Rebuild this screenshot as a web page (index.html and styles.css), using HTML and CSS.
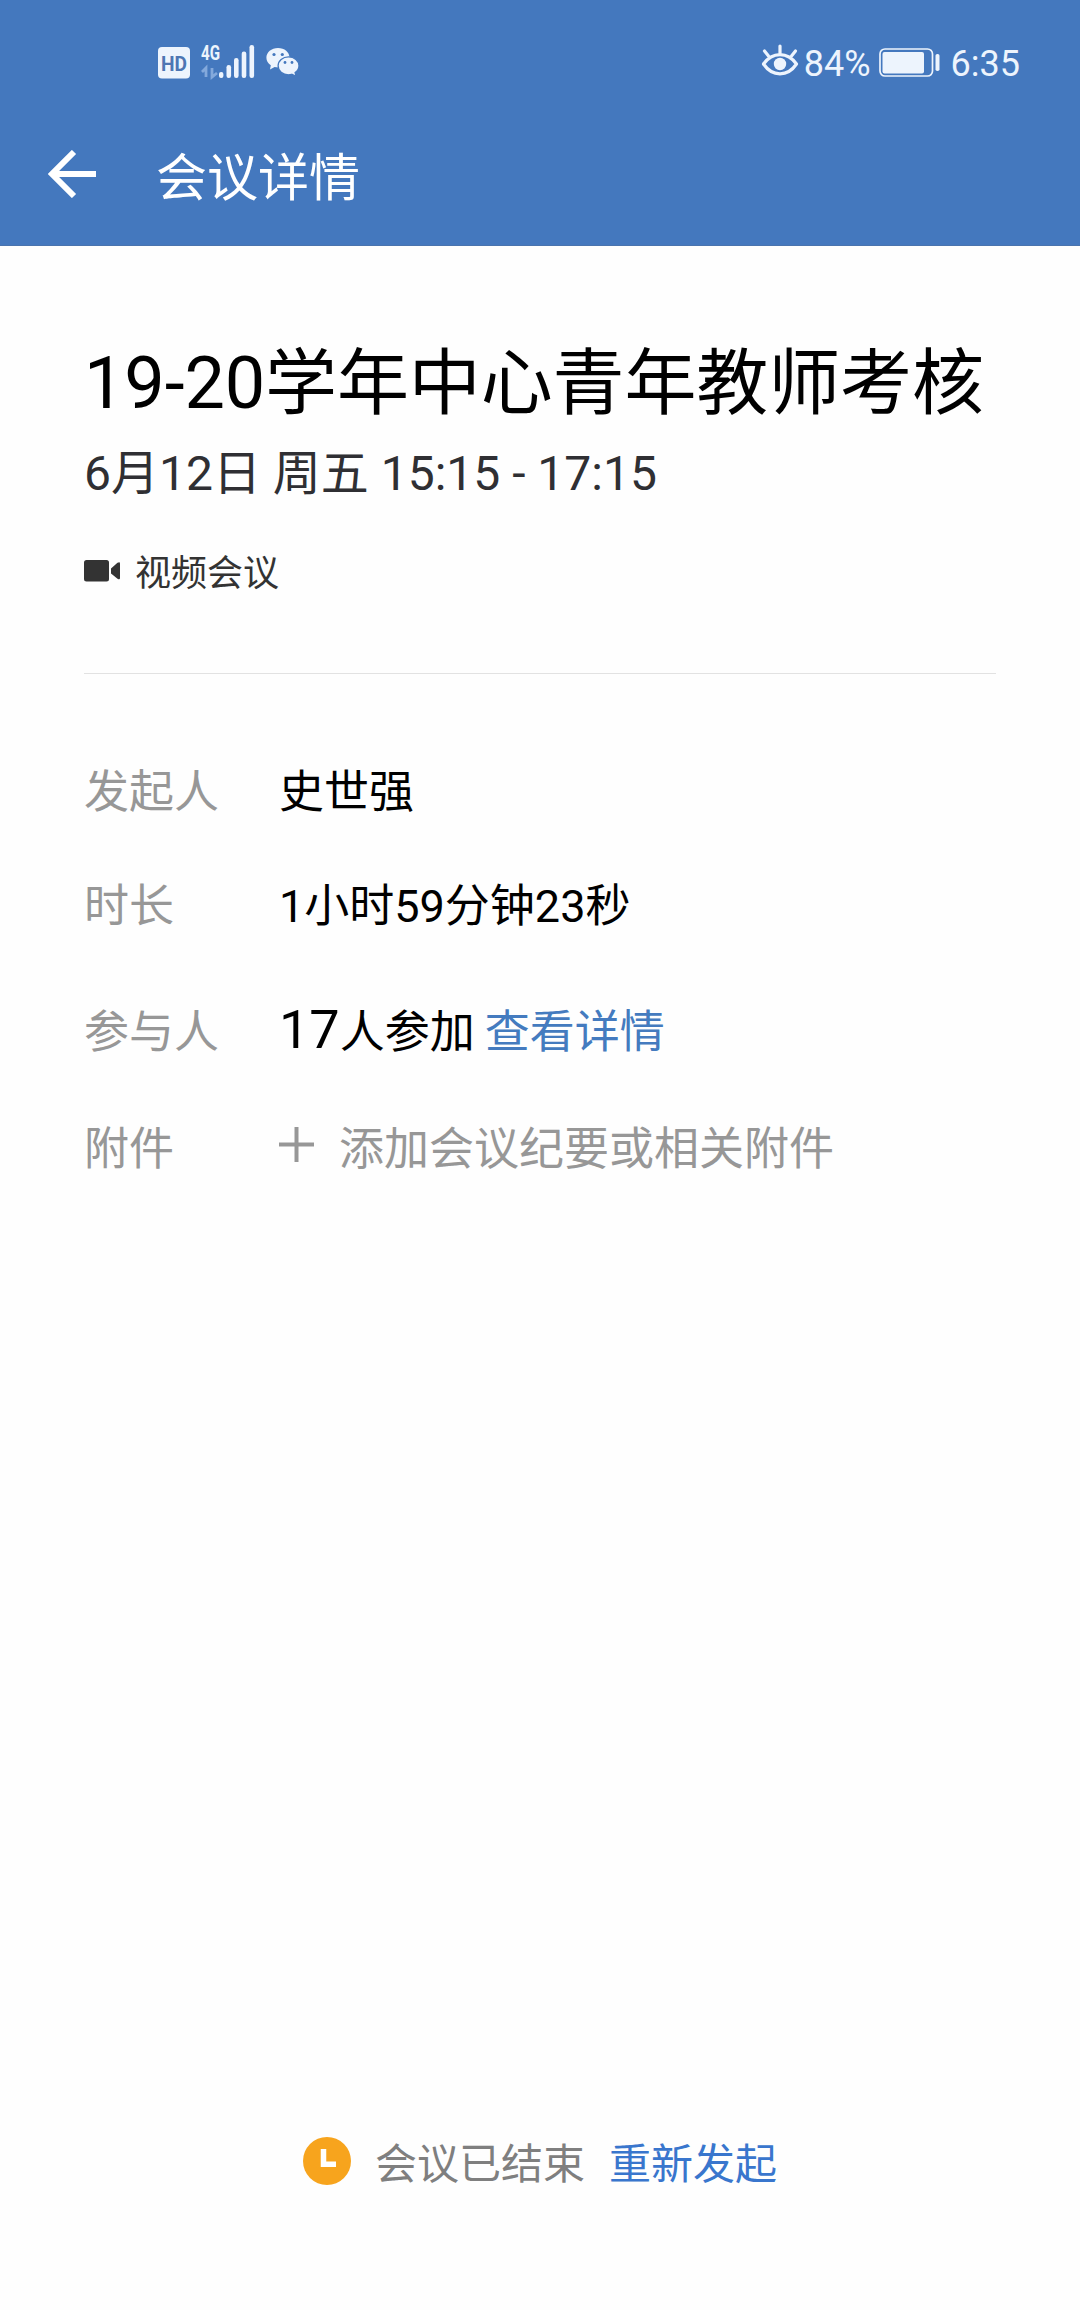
FILE: index.html
```html
<!DOCTYPE html>
<html lang="zh-CN">
<head>
<meta charset="utf-8">
<title>会议详情</title>
<link rel="stylesheet" href="styles.css">
</head>
<body>
<div class="screen">
  <header class="header">
    <div class="status">
      <div class="status-left">
        <svg class="hd" width="34" height="34" viewBox="0 0 34 34">
          <rect x="1" y="1" width="32" height="31.5" rx="4" fill="#edf4fd"/>
          <text x="17" y="24.500" class="hd-text" textLength="26" lengthAdjust="spacingAndGlyphs">HD</text>
        </svg>
        <svg class="signal" width="56" height="44" viewBox="0 -6 56 44">
          <text x="1" y="17" class="net-text" textLength="19" lengthAdjust="spacingAndGlyphs">4G</text>
          <path d="M2 29l4-4v9M12 25v9l5-4" fill="none" stroke="#83a9dc" stroke-width="2.800"/>
          <g fill="#edf4fd">
            <rect x="19" y="29" width="4.4" height="6" rx="2"/>
            <rect x="26.5" y="22" width="4.6" height="13" rx="2.2"/>
            <rect x="34" y="15" width="4.6" height="20" rx="2.2"/>
            <rect x="41.7" y="8.500" width="4.6" height="26.500" rx="2.2"/>
            <rect x="49.500" y="2" width="4.6" height="33" rx="2.2"/>
          </g>
        </svg>
        <svg class="wechat" width="34" height="30" viewBox="0 0 34 30">
          <path d="M12 1C5.400 1 .4 5.300.4 10.700c0 3.200 1.700 5.800 4.400 7.600L4 22.500l4.600-2.400c1.200.3 2.300.4 3.600.4 6.400 0 11.300-4.300 11.300-9.800S18.500 1 12 1z" fill="#edf4fd"/>
          <path d="M22.500 9.800c-5.800 0-10.400 4-10.400 9s4.600 9 10.400 9c1.200 0 2.200-.2 3.300-.5l4.200 2-.9-3.700c2.400-1.700 3.900-4 3.900-6.800 0-5-4.700-9-10.500-9z" fill="#edf4fd" stroke="#4478be" stroke-width="1.300"/>
          <g fill="#4478be"><circle cx="8" cy="7.500" r="1.600"/><circle cx="16.300" cy="7.500" r="1.600"/><circle cx="19" cy="15.500" r="1.400"/><circle cx="26" cy="15.500" r="1.400"/></g>
        </svg>
      </div>
      <div class="status-right">
        <svg class="eye" width="38" height="34" viewBox="0 0 38 34">
          <g fill="none" stroke="#edf4fd" stroke-width="3.200" stroke-linecap="round">
            <path d="M2.500 20C7 13.700 12.500 10.600 19 10.600S31 13.700 35.500 20C31 26.600 25.500 29.800 19 29.800S7 26.600 2.500 20z" stroke-linejoin="round"/>
            <path d="M19 9V2M7.500 12L3.500 7M30.500 12l4-5"/>
          </g>
          <circle cx="19" cy="20" r="6.200" fill="#edf4fd"/>
        </svg>
        <span class="percent">84%</span>
        <svg class="battery" width="62" height="30" viewBox="0 0 62 30">
          <rect x="1" y="1" width="52.500" height="27" rx="5" fill="none" stroke="#edf4fd" stroke-width="1.700"/>
          <rect x="3.500" y="4" width="41.500" height="21.500" rx="2" fill="#edf4fd"/>
          <rect x="56.500" y="6" width="4" height="17" rx="1.800" fill="#edf4fd"/>
        </svg>
        <span class="clock">6:35</span>
      </div>
    </div>
    <nav class="navbar">
      <svg class="back" width="48" height="48" viewBox="0 0 48 48">
        <path d="M48 24H5M26 2L4 24l22 22" fill="none" stroke="#fff" stroke-width="6"/>
      </svg>
      <span class="nav-title">会议详情</span>
    </nav>
  </header>

  <main class="content">
    <h1 class="title">19-20学年中心青年教师考核</h1>
    <div class="date">6月12日 周五 15:15 - 17:15</div>
    <div class="kind">
      <svg class="camera" width="37" height="22" viewBox="0 0 37 22">
        <rect x="0" y="0" width="25" height="21.500" rx="2.500" fill="#333"/>
        <path d="M27 8.500l6.500-5.700Q36 1.200 36 3.500V18q0 2.300-2.500.7L27 13.500z" fill="#333"/>
      </svg>
      <span>视频会议</span>
    </div>
    <dl class="details">
      <div class="row"><dt>发起人</dt><dd>史世强</dd></div>
      <div class="row duration"><dt>时长</dt><dd>1小时59分钟23秒</dd></div>
      <div class="row people"><dt>参与人</dt><dd><span class="count">17</span>人参加<a class="link">查看详情</a></dd></div>
      <div class="row files"><dt>附件</dt><dd class="add">
        <svg class="plus" width="36" height="36" viewBox="0 0 36 36"><path d="M0 17.500h35M17.500 0v35" stroke="#979797" stroke-width="4"/></svg>
        <span>添加会议纪要或相关附件</span></dd></div>
    </dl>
  </main>

  <footer class="footer">
    <svg class="ended" width="48" height="48" viewBox="0 0 48 48">
      <circle cx="24" cy="24" r="24" fill="#f7a41d"/>
      <path d="M20.500 12v15.300H33" fill="none" stroke="#fff" stroke-width="5.500"/>
    </svg>
    <span class="ended-text">会议已结束</span>
    <a class="restart">重新发起</a>
  </footer>
</div>
</body>
</html>
```
FILE: styles.css
```css
* { box-sizing: border-box; }

body {
  margin: 0;
  background: #fefefe;
  font-family: Roboto, "Noto Sans CJK SC", sans-serif;
  color: #000;
}

.screen {
  width: 1080px;
  height: 2310px;
  display: flex;
  flex-direction: column;
}

svg { display: block; flex: none; }

.header {
  height: 246px;
  flex: none;
  background: #4478be;
  border-bottom: 1px solid #4a74ae;
  color: #fff;
}

.status {
  height: 104px;
  padding: 0 60px 0 157px;
  display: flex;
  justify-content: space-between;
  color: #edf4fd;
  font-size: 36px;
  line-height: 40px;
}

.status-left,
.status-right { display: flex; align-items: flex-start; }

.hd { margin-top: 46px; }
.hd-text {
  font: 700 21px Roboto, sans-serif;
  text-anchor: middle;
  fill: #4d76b3;
}
.signal { margin: 37px 0 0 9px; }
.net-text { font: 700 20px Roboto, sans-serif; fill: #edf4fd; }
.wechat { margin: 47px 0 0 10px; }

.eye { margin-top: 44px; }
.percent { margin: 44px 0 0 5px; }
.battery { margin: 48px 0 0 8px; }
.clock { margin: 44px 0 0 10px; }

.navbar {
  height: 141px;
  padding: 0 48px;
  display: flex;
  align-items: flex-start;
}
.back { margin-top: 46px; }
.nav-title {
  margin: 45px 0 0 60px;
  font-size: 51px;
  line-height: 60px;
}

.content {
  flex: 1;
  padding: 96px 84px 0;
}

.title {
  margin: 0;
  font-size: 72px;
  font-weight: 400;
  line-height: 84px;
  letter-spacing: -0.13px;
  white-space: nowrap;
}

.date {
  margin-top: 18px;
  font-size: 48px;
  line-height: 60px;
  color: #2f2f33;
}

.kind {
  height: 170px;
  padding-top: 47px;
  border-bottom: 1px solid #e2e2e2;
  display: flex;
  align-items: flex-start;
  font-size: 36px;
  line-height: 46px;
  color: #333;
}
.camera { margin: 9px 14px 0 0; }

.details { margin: 89px 0 0; }

.row {
  display: grid;
  grid-template-columns: 195px 1fr;
  height: 60px;
  font-size: 45px;
  line-height: 60px;
}
.row dt { color: #979797; }
.row dd { margin: 0; white-space: nowrap; }
.duration { margin-top: 54px; }
.people { margin-top: 66px; }
.files { margin-top: 57px; }

.count { font-size: 54px; line-height: 0; }
.link { margin-left: 10px; color: #447bbf; }

.add {
  display: flex;
  align-items: flex-start;
  color: #979797;
}
.plus { margin: 7px 24px 0 0; }

.footer {
  height: 177px;
  flex: none;
  padding-left: 303px;
  display: flex;
  align-items: flex-start;
  font-size: 42px;
  line-height: 64px;
}
.ended { margin-top: 4px; }
.ended-text { margin-left: 24px; color: #7f7f7f; }
.restart { margin-left: 24px; color: #3976cd; }
```
